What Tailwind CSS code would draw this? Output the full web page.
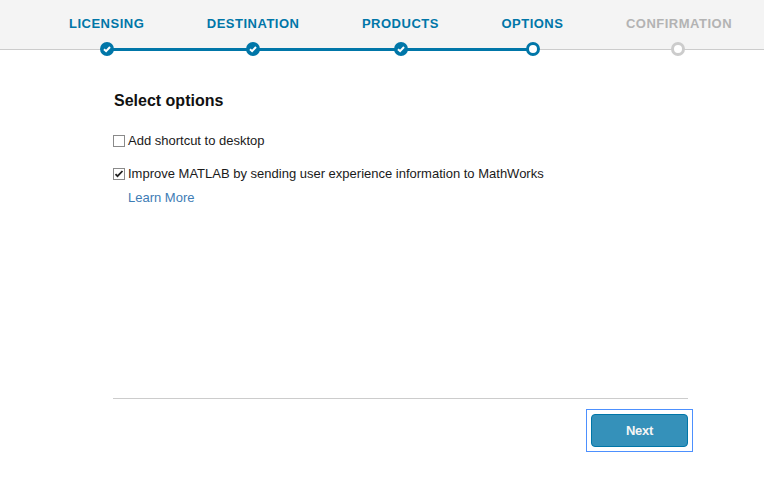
<!DOCTYPE html>
<html lang="en">
<head>
    <meta charset="UTF-8">
    <meta name="viewport" content="width=device-width, initial-scale=1.0">
    <title>Select options</title>
    <script src="https://cdn.jsdelivr.net/npm/@tailwindcss/browser@4"></script>
</head>
<body class="bg-white w-[764px] h-[490px] overflow-hidden font-['Liberation_Sans',Arial,sans-serif] text-[#1a1a1a]">
    <header class="relative h-[50px] bg-[#f4f4f4] border-b border-[#cccccc] flex gap-[62.5px] pl-[69px]">
        <div class="absolute left-[107px] top-[48px] w-[426px] h-[3px] bg-[#0076a8]"></div>
        <div class="relative flex flex-col items-center">
            <span class="mt-[15px] h-[17px] shrink-0 text-[13px] leading-[17px] font-bold tracking-[0.5px] text-[#0076a8]">LICENSING</span>
            <span class="mt-[10px] shrink-0 w-[14px] h-[14px] rounded-full bg-[#0076a8] flex items-center justify-center">
                <svg class="w-[10px] h-[10px]" viewBox="0 0 10 10"><path d="M2 5.2l2.1 2L8 3" fill="none" stroke="#fff" stroke-width="2"/></svg>
            </span>
        </div>
        <div class="relative flex flex-col items-center">
            <span class="mt-[15px] h-[17px] shrink-0 text-[13px] leading-[17px] font-bold tracking-[0.5px] text-[#0076a8]">DESTINATION</span>
            <span class="mt-[10px] shrink-0 w-[14px] h-[14px] rounded-full bg-[#0076a8] flex items-center justify-center">
                <svg class="w-[10px] h-[10px]" viewBox="0 0 10 10"><path d="M2 5.2l2.1 2L8 3" fill="none" stroke="#fff" stroke-width="2"/></svg>
            </span>
        </div>
        <div class="relative flex flex-col items-center">
            <span class="mt-[15px] h-[17px] shrink-0 text-[13px] leading-[17px] font-bold tracking-[0.5px] text-[#0076a8]">PRODUCTS</span>
            <span class="mt-[10px] shrink-0 translate-x-[1px] w-[14px] h-[14px] rounded-full bg-[#0076a8] flex items-center justify-center">
                <svg class="w-[10px] h-[10px]" viewBox="0 0 10 10"><path d="M2 5.2l2.1 2L8 3" fill="none" stroke="#fff" stroke-width="2"/></svg>
            </span>
        </div>
        <div class="relative flex flex-col items-center">
            <span class="mt-[15px] h-[17px] shrink-0 text-[13px] leading-[17px] font-bold tracking-[0.5px] text-[#0076a8]">OPTIONS</span>
            <span class="mt-[10px] shrink-0 translate-x-[1px] w-[14px] h-[14px] rounded-full bg-white border-[3px] border-[#0076a8]"></span>
        </div>
        <div class="relative flex flex-col items-center">
            <span class="mt-[15px] h-[17px] shrink-0 text-[13px] leading-[17px] font-bold tracking-[0.5px] text-[#b3b3b3]">CONFIRMATION</span>
            <span class="mt-[10px] shrink-0 -translate-x-[1px] w-[14px] h-[14px] rounded-full bg-white border-[3px] border-[#cccccc]"></span>
        </div>
    </header>

    <main class="pl-[113px] w-[688px]">
        <h2 class="mt-[41px] pl-[1px] text-[16px] leading-[20px] font-bold text-[#111111]">Select options</h2>
        <label class="mt-[21px] flex items-center h-[18px] text-[13px]">
            <span class="w-[12px] h-[12px] bg-white border border-[#8a8a8a]"></span>
            <span class="ml-[3px]">Add shortcut to desktop</span>
        </label>
        <label class="mt-[15px] flex items-center h-[18px] text-[13px]">
            <span class="w-[12px] h-[12px] bg-white border border-[#8a8a8a] flex items-center justify-center">
                <svg class="w-[10px] h-[10px]" viewBox="0 0 10 10"><path d="M1.5 5.2l2 2L8.5 2" fill="none" stroke="#222" stroke-width="1.8"/></svg>
            </span>
            <span class="ml-[3px]">Improve MATLAB by sending user experience information to MathWorks</span>
        </label>
        <a href="#" class="block mt-[6px] ml-[15px] text-[13px] leading-[18px] text-[#3e7cb5]">Learn More</a>

        <div class="mt-[191px] border-t border-[#cccccc] flex justify-end">
            <div class="mt-[10px] -mr-[5px] border border-[#4d90fe] p-[4px]">
                <button class="w-[97px] h-[33px] bg-[#3591ba] border border-[#0076a8] rounded-[4px] text-[#f5f5f5] text-[13px] font-bold tracking-[-0.3px]">Next</button>
            </div>
        </div>
    </main>
</body>
</html>
